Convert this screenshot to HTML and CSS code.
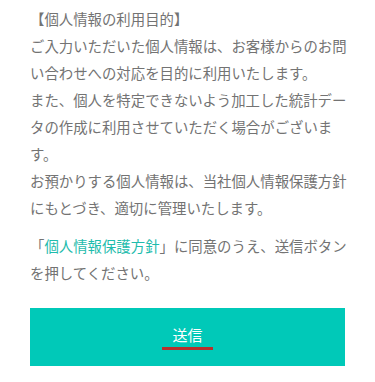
FILE: index.html
```html
<!DOCTYPE html>
<html lang="ja">
<head>
    <meta charset="UTF-8">
    <meta name="viewport" content="width=device-width, initial-scale=1.0">
    <title>お問い合わせ</title>
    <link rel="stylesheet" href="styles.css">
</head>
<body>

    <div class="privacy">
        <p class="privacy-title">【個人情報の利用目的】</p>
        <p>ご入力いただいた個人情報は、お客様からのお問い合わせへの対応を目的に利用いたします。</p>
        <p>また、個人を特定できないよう加工した統計データの作成に利用させていただく場合がございます。</p>
        <p>お預かりする個人情報は、当社個人情報保護方針にもとづき、適切に管理いたします。</p>
        <p class="agree">「<a href="#">個人情報保護方針</a>」に同意のうえ、送信ボタンを押してください。</p>
    </div>

    <div class="form-submit">
        <button type="submit" class="submit-btn"><span>送信</span></button>
    </div>

</body>
</html>
```
FILE: styles.css
```css
body {
    font-family: "Noto Sans CJK JP", sans-serif;
    margin: 0;
    padding: 0;
    background-color: #fff;
    color: #737373;
}

.privacy {
    width: 325px;
    padding: 5px 0 0 30px;
}

.privacy p {
    margin: 0;
    font-size: 14.4px;
    line-height: 27px;
}

.privacy .agree {
    margin-top: 11px;
}

.privacy a {
    color: #1fbcad;
    text-decoration: none;
}

.form-submit {
    padding: 22px 30px 0 30px;
}

.submit-btn {
    display: block;
    width: 100%;
    height: 58px;
    border: none;
    background-color: #00c9b8;
    color: #fff;
    font-family: "Noto Sans CJK JP", sans-serif;
    font-size: 15px;
    cursor: pointer;
}

.submit-btn span {
    display: inline-block;
    padding: 0 10px 2px 10px;
    border-bottom: 3px solid #b8302d;
}
```
